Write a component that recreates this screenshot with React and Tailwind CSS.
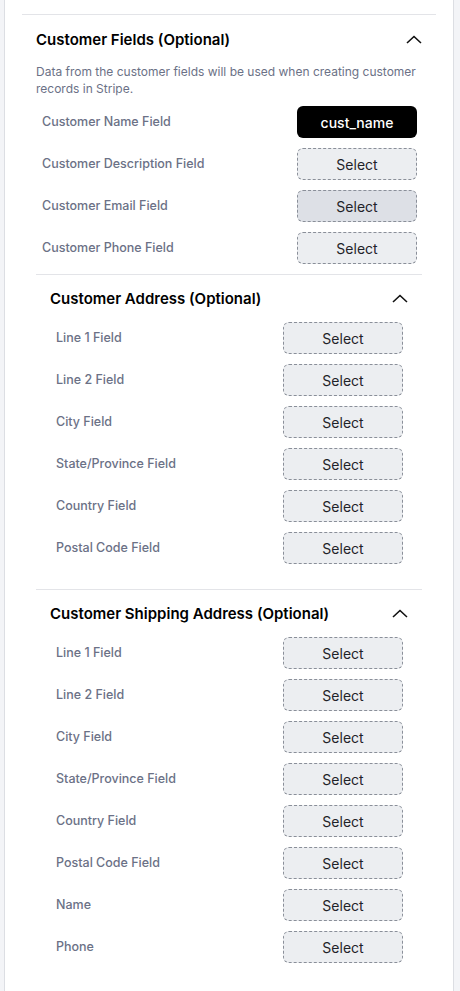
import React from "react";

const ChevronUp = () => (
  <svg width="16" height="10" viewBox="0 0 16 10" fill="none">
    <path d="M1 8L8 1.5L15 8" stroke="#111" strokeWidth="1.6" />
  </svg>
);

const FieldRow = ({ label, value, hovered }) => (
  <div className="flex items-center justify-between pl-[6px] pr-[5px]">
    <span className="text-[12.5px] font-medium text-[#6b7186]">{label}</span>
    {value ? (
      <button className="w-[120px] h-[32px] rounded-[6px] bg-black text-white text-[14px] font-medium">
        {value}
      </button>
    ) : (
      <button
        className={
          hovered
            ? "w-[120px] h-[32px] rounded-[6px] border border-dashed border-[#8a8f99] bg-[#dde0e6] text-[14px] text-[#1f2329]"
            : "w-[120px] h-[32px] rounded-[6px] border border-dashed border-[#8a8f99] bg-[#eceef1] text-[14px] text-[#1f2329]"
        }
      >
        Select
      </button>
    )}
  </div>
);

const SubSection = ({ title, fields }) => (
  <div className="border-t border-[#e3e4e8] pt-3 pb-[15px] px-[14px]">
    <div className="flex items-center justify-between h-6">
      <h3 className="text-[15px] font-semibold text-black">{title}</h3>
      <ChevronUp />
    </div>
    <div className="mt-[11px] flex flex-col gap-[10px]">
      {fields.map((f) => (
        <FieldRow key={f} label={f} />
      ))}
    </div>
  </div>
);

const addressFields = [
  "Line 1 Field",
  "Line 2 Field",
  "City Field",
  "State/Province Field",
  "Country Field",
  "Postal Code Field",
];

export default function App() {
  return (
    <div
      className="min-h-screen bg-[#f3f4f7] pl-[4px] pr-[6px]"
      style={{ fontFamily: "Inter, 'Noto Sans', sans-serif" }}
    >
      <div className="min-h-screen bg-white border-x border-[#dcdee3] pt-[14px] px-[17px]">
        <div className="border-t border-[#e3e4e8] pt-[13px] px-[14px]">
          <div className="flex items-center justify-between h-6">
            <h2 className="text-[15px] font-semibold text-black">Customer Fields (Optional)</h2>
            <ChevronUp />
          </div>
          <p className="mt-[11px] text-[12px] leading-[17px] text-[#6b7186]">
            Data from the customer fields will be used when creating customer records in Stripe.
          </p>
          <div className="mt-[9px] flex flex-col gap-[10px]">
            <FieldRow label="Customer Name Field" value="cust_name" />
            <FieldRow label="Customer Description Field" />
            <FieldRow label="Customer Email Field" hovered />
            <FieldRow label="Customer Phone Field" />
            <SubSection title="Customer Address (Optional)" fields={addressFields} />
            <SubSection
              title="Customer Shipping Address (Optional)"
              fields={[...addressFields, "Name", "Phone"]}
            />
          </div>
        </div>
      </div>
    </div>
  );
}
